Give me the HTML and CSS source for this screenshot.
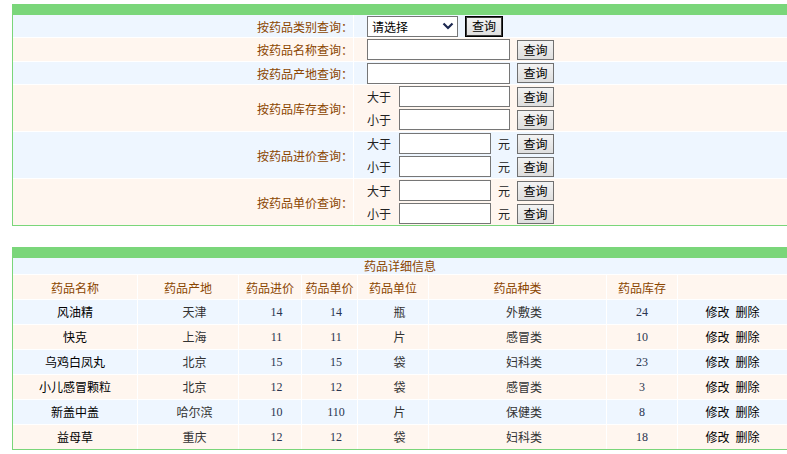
FILE: index.html
```html
<!DOCTYPE html>
<html lang="zh-CN">
<head>
    <meta charset="UTF-8">
    <title>药品查询</title>
    <link rel="stylesheet" href="styles.css">
</head>
<body>
    <div class="query">
        <div class="qrow blue">
            <div class="qlabel">按药品类别查询：</div>
            <div class="qfield">
                <div class="line line-sm">
                    <span class="select">
                        <select><option>请选择</option></select>
                        <svg width="12" height="8" viewBox="0 0 12 8"><path d="M1.5 1.5 L6 6 L10.5 1.5" fill="none" stroke="#1c2850" stroke-width="2.2"/></svg>
                    </span>
                    <button class="btn btn-default">查询</button>
                </div>
            </div>
        </div>
        <div class="qrow beige">
            <div class="qlabel">按药品名称查询：</div>
            <div class="qfield">
                <div class="line">
                    <input type="text" class="inp-long">
                    <button class="btn">查询</button>
                </div>
            </div>
        </div>
        <div class="qrow blue">
            <div class="qlabel">按药品产地查询：</div>
            <div class="qfield">
                <div class="line line-sm">
                    <input type="text" class="inp-long">
                    <button class="btn">查询</button>
                </div>
            </div>
        </div>
        <div class="qrow beige">
            <div class="qlabel">按药品库存查询：</div>
            <div class="qfield">
                <div class="line">
                    <span class="cmp">大于</span>
                    <input type="text" class="inp-mid">
                    <button class="btn">查询</button>
                </div>
                <div class="line">
                    <span class="cmp">小于</span>
                    <input type="text" class="inp-mid">
                    <button class="btn">查询</button>
                </div>
            </div>
        </div>
        <div class="qrow blue">
            <div class="qlabel">按药品进价查询：</div>
            <div class="qfield">
                <div class="line">
                    <span class="cmp">大于</span>
                    <input type="text" class="inp-short">
                    <span class="unit">元</span>
                    <button class="btn">查询</button>
                </div>
                <div class="line">
                    <span class="cmp">小于</span>
                    <input type="text" class="inp-short">
                    <span class="unit">元</span>
                    <button class="btn">查询</button>
                </div>
            </div>
        </div>
        <div class="qrow beige">
            <div class="qlabel">按药品单价查询：</div>
            <div class="qfield">
                <div class="line">
                    <span class="cmp">大于</span>
                    <input type="text" class="inp-short">
                    <span class="unit">元</span>
                    <button class="btn">查询</button>
                </div>
                <div class="line">
                    <span class="cmp">小于</span>
                    <input type="text" class="inp-short">
                    <span class="unit">元</span>
                    <button class="btn">查询</button>
                </div>
            </div>
        </div>
    </div>

    <div class="list">
        <div class="title">药品详细信息</div>

        <div class="row head">
            <div>药品名称</div><div>药品产地</div><div>药品进价</div><div>药品单价</div>
            <div>药品单位</div><div>药品种类</div><div>药品库存</div><div></div>
        </div>

        <div class="row data blue">
            <div class="name">风油精</div><div class="pad">天津</div><div class="pad num">14</div><div class="pad num">14</div>
            <div class="pad">瓶</div><div class="pad">外敷类</div><div class="num">24</div><div class="ops">修改&nbsp;&nbsp;删除</div>
        </div>
        <div class="row data beige">
            <div class="name">快克</div><div class="pad">上海</div><div class="pad num">11</div><div class="pad num">11</div>
            <div class="pad">片</div><div class="pad">感冒类</div><div class="num">10</div><div class="ops">修改&nbsp;&nbsp;删除</div>
        </div>
        <div class="row data blue">
            <div class="name">乌鸡白凤丸</div><div class="pad">北京</div><div class="pad num">15</div><div class="pad num">15</div>
            <div class="pad">袋</div><div class="pad">妇科类</div><div class="num">23</div><div class="ops">修改&nbsp;&nbsp;删除</div>
        </div>
        <div class="row data beige">
            <div class="name">小儿感冒颗粒</div><div class="pad">北京</div><div class="pad num">12</div><div class="pad num">12</div>
            <div class="pad">袋</div><div class="pad">感冒类</div><div class="num">3</div><div class="ops">修改&nbsp;&nbsp;删除</div>
        </div>
        <div class="row data blue">
            <div class="name">新盖中盖</div><div class="pad">哈尔滨</div><div class="pad num">10</div><div class="pad num">110</div>
            <div class="pad">片</div><div class="pad">保健类</div><div class="num">8</div><div class="ops">修改&nbsp;&nbsp;删除</div>
        </div>
        <div class="row data beige">
            <div class="name">益母草</div><div class="pad">重庆</div><div class="pad num">12</div><div class="pad num">12</div>
            <div class="pad">袋</div><div class="pad">妇科类</div><div class="num">18</div><div class="ops">修改&nbsp;&nbsp;删除</div>
        </div>
    </div>
</body>
</html>
```

FILE: styles.css
```css
html {
    overflow: hidden;
}
body {
    margin: 4px 0 0 12px;
    font-family: "Liberation Serif", "Noto Sans CJK SC", serif;
    font-size: 12px;
    color: #000;
    background: #fff;
}
.blue {
    background: #eef6ff;
}
.beige {
    background: #fff6ef;
}

/* query form */
.query {
    width: 774px;
    border: 1px solid #7ad67a;
    border-top: 11px solid #7ad67a;
    background: #fff;
    display: grid;
    row-gap: 1px;
}
.qrow {
    display: grid;
    grid-template-columns: 340px 1fr;
    column-gap: 1px;
    background: #fff;
}
.qrow.blue > div {
    background: #eef6ff;
}
.qrow.beige > div {
    background: #fff6ef;
}
.qlabel {
    display: flex;
    align-items: center;
    justify-content: flex-end;
    padding-right: 0;
    color: #8b4500;
    font-family: "Noto Sans CJK SC", sans-serif;
}
.qfield {
    padding-left: 13px;
}
.line {
    height: 23px;
    display: flex;
    align-items: center;
    gap: 7px;
}
.line-sm {
    height: 22px;
}
.cmp {
    width: 25px;
    color: #222;
    font-family: "Noto Sans CJK SC", sans-serif;
}
.unit {
    width: 12px;
    color: #222;
    font-family: "Noto Sans CJK SC", sans-serif;
}
input {
    box-sizing: border-box;
    height: 21px;
    border: 1px solid #767676;
    background: #fff;
    padding: 0 3px;
    margin: 0;
}
.inp-long {
    width: 143px;
}
.inp-mid {
    width: 111px;
}
.inp-short {
    width: 92px;
}
.select {
    box-sizing: border-box;
    width: 91px;
    height: 21px;
    border: 1px solid #767676;
    background: #fff;
    display: inline-flex;
    align-items: center;
    padding-right: 3px;
}
.select select {
    appearance: none;
    -webkit-appearance: none;
    border: none;
    background: transparent;
    flex: 1;
    min-width: 0;
    padding: 0 0 0 4px;
    font-family: "Noto Sans CJK SC", sans-serif;
    font-size: 12px;
    color: #000;
    outline: none;
}
.btn {
    box-sizing: border-box;
    width: 37px;
    height: 20px;
    padding: 0;
    border: 1px solid #707070;
    background: linear-gradient(#f3f3f3, #dedede);
    font-family: "Noto Sans CJK SC", sans-serif;
    font-size: 12px;
    color: #000;
    line-height: 16px;
}
.btn-default {
    width: 38px;
    height: 21px;
    border: 1px solid #000;
    box-shadow: inset 0 0 0 1px #3a3a3a;
}

/* drug list */
.list {
    width: 774px;
    margin-top: 21px;
    border: 1px solid #7ad67a;
    border-top: 11px solid #7ad67a;
    background: #fff;
    display: grid;
    grid-template-columns: 124px 100px 62px 55px 70px 177px 70px 1fr;
    gap: 1px;
}
.title {
    grid-column: 1 / -1;
    height: 16px;
    line-height: 16px;
    text-align: center;
    color: #8b4500;
    background: #eef6ff;
    font-family: "Noto Sans CJK SC", sans-serif;
}
.row {
    display: contents;
}
.row > div {
    display: flex;
    align-items: center;
    justify-content: center;
    height: 24px;
}
.row.head > div {
    background: #fff6ef;
    color: #8b4500;
    font-family: "Noto Sans CJK SC", sans-serif;
}
.row.blue > div {
    background: #eef6ff;
}
.row.beige > div {
    background: #fff6ef;
}
.data > div {
    color: #333;
}
.data .name,
.data .ops {
    color: #000;
}
.data .pad {
    padding-left: 13px;
}
.data .num {
    color: #2a3550;
}
```
